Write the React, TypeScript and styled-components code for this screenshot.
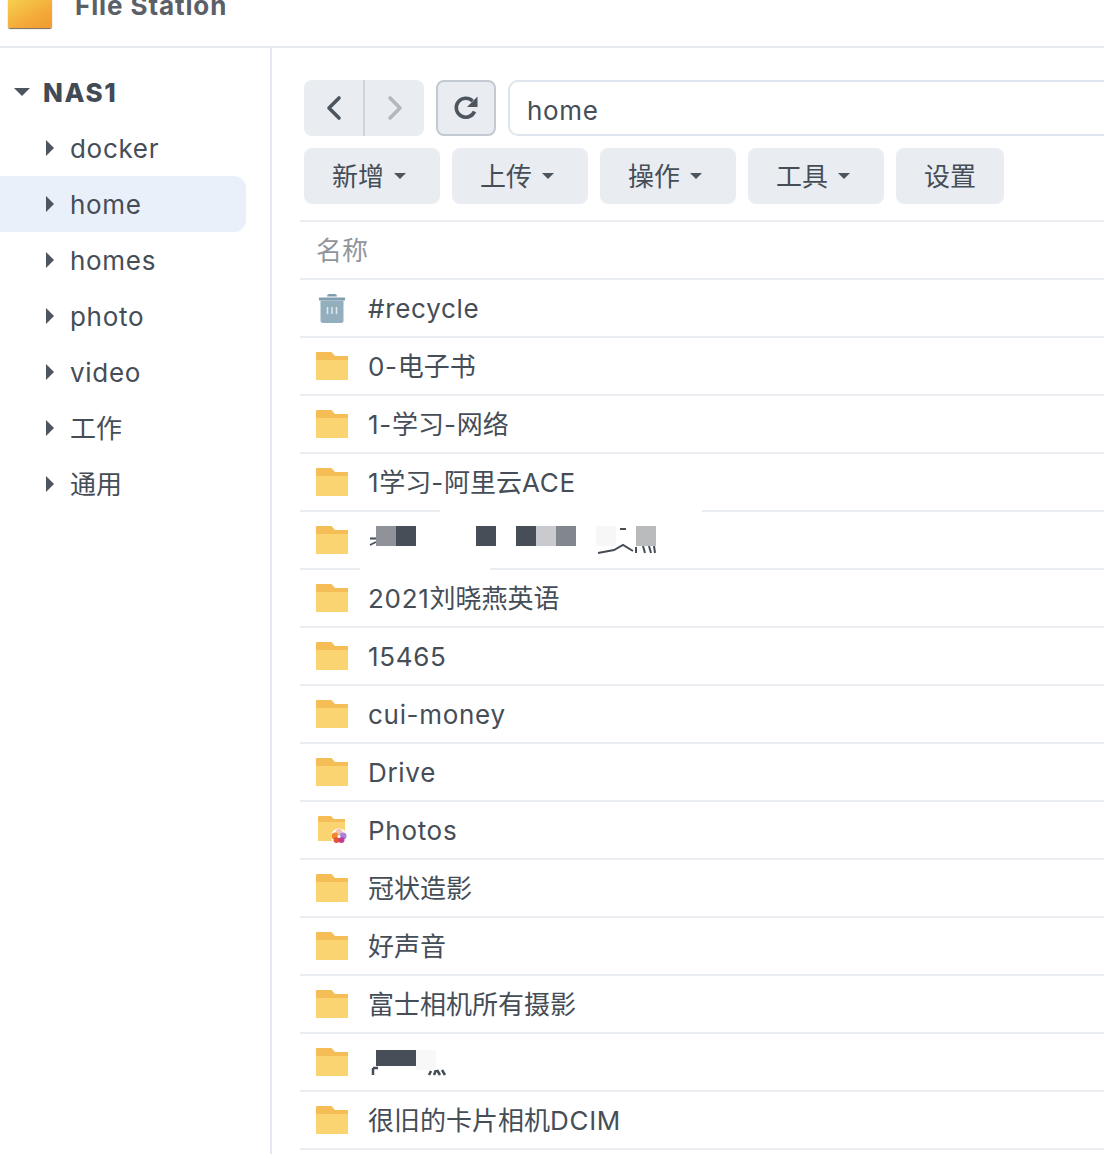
import React from 'react'
import styled, { createGlobalStyle } from 'styled-components'

const TEXT = '#454d57'
const LINE = '#e9edf1'

const GlobalStyle = createGlobalStyle`
  html, body {
    margin: 0;
    height: 1154px;
    overflow: hidden;
    background: #fff;
    font-family: Inter, "Noto Sans CJK SC", sans-serif;
    color: ${TEXT};
  }
`

const treeItems = ['docker', 'home', 'homes', 'photo', 'video', '工作', '通用']

type FileRow = {
  name?: string
  icon?: 'folder' | 'trash' | 'photos'
  scraps?: 'first' | 'second'
}

const files: FileRow[] = [
  { name: '#recycle', icon: 'trash' },
  { name: '0-电子书' },
  { name: '1-学习-网络' },
  { name: '1学习-阿里云ACE' },
  { scraps: 'first' },
  { name: '2021刘晓燕英语' },
  { name: '15465' },
  { name: 'cui-money' },
  { name: 'Drive' },
  { name: 'Photos', icon: 'photos' },
  { name: '冠状造影' },
  { name: '好声音' },
  { name: '富士相机所有摄影' },
  { scraps: 'second' },
  { name: '很旧的卡片相机DCIM' },
]

// latin runs are a touch wider in the original font, CJK runs are not
const Label = ({ text }: { text: string }) => (
  <LabelText>
    {text.split(/([\x20-\x7e]+)/).filter(Boolean).map((run, i) =>
      /^[\x20-\x7e]+$/.test(run) ? <Latin key={i}>{run}</Latin> : run
    )}
  </LabelText>
)

const FolderIcon = () => (
  <svg width="32" height="28" viewBox="0 0 32 28">
    <path d="M0 1a1 1 0 0 1 1-1h14.500l3.500 4h13v6H0z" fill="#f5bd55" />
    <path d="M0 8h32v20H0z" fill="#f9d471" />
  </svg>
)

const TrashIcon = () => (
  <svg width="26" height="30" viewBox="0 0 26 30">
    <path d="M8 3.500Q8 1 10 1h6q2 0 2 2.500z" fill="#7f9fb0" />
    <path d="M0 4.500h26v3H0z" fill="#7f9fb0" />
    <path d="M1.500 7.500h23v20a2.500 2.500 0 0 1-2.500 2.500H4a2.500 2.500 0 0 1-2.500-2.500z" fill="#93afbe" />
    <path d="M8.500 14v7M13 14v7M17.500 14v7" stroke="#dfe8ed" strokeWidth="1.500" />
  </svg>
)

const PhotosIcon = () => (
  <svg width="30" height="28" viewBox="0 0 30 28">
    <path d="M1 1a1 1 0 0 1 1-1h12l3 3h11v6H1z" fill="#f5bd55" />
    <path d="M1 6h27v19H1z" fill="#f9d471" />
    <circle cx="22" cy="20.500" r="8" fill="#fff" />
    <circle cx="22" cy="16.500" r="3.500" fill="#f3c1b4" />
    <circle cx="18" cy="20" r="3.500" fill="#f08a2c" />
    <circle cx="26" cy="20" r="3.500" fill="#a583dc" />
    <circle cx="19.500" cy="24" r="3" fill="#e8552e" />
    <circle cx="24.500" cy="24" r="3" fill="#c23c96" />
    <circle cx="22" cy="20.500" r="1.500" fill="#fff" />
  </svg>
)

const NavArrow = ({ dir, dim }: { dir: 'left' | 'right'; dim?: boolean }) => (
  <svg width="16" height="26" viewBox="0 0 16 26">
    <path
      d={dir === 'left' ? 'M13 3 3 13l10 10' : 'M3 3l10 10L3 23'}
      fill="none"
      stroke={dim ? '#b3b7bb' : '#4d555f'}
      strokeWidth="3.600"
      strokeLinecap="round"
      strokeLinejoin="round"
    />
  </svg>
)

const RefreshIcon = () => (
  <svg width="26" height="26" viewBox="0 0 26 26">
    <path
      d="M21.500 16.500A9.500 9.500 0 1 1 19.500 6"
      fill="none"
      stroke="#4d555f"
      strokeWidth="3.600"
    />
    <path d="M24.500 1.500v10.500H14z" fill="#4d555f" />
  </svg>
)

const ScrapsOne = () => (
  <ScrapLayer>
    <svg width="300" height="28" viewBox="0 0 300 28">
      <path d="M8 10.500h14l3 1.500M8 17l6-3" stroke="#454d57" strokeWidth="1.800" fill="none" />
      <path d="M236 25l16-3 9-5 10 6M274 19v6M281 18l2 7M287 18l2 7M292 18l1 7M258 1h6" stroke="#454d57" strokeWidth="2" fill="none" />
    </svg>
  </ScrapLayer>
)

const ScrapsTwo = () => (
  <ScrapLayer>
    <svg width="100" height="28" viewBox="0 0 100 28">
      <path d="M11 18h5M11 18v7" stroke="#454d57" strokeWidth="2.500" fill="none" />
      <path d="M67 25l2-4M72 25l2-5M78 25l-3-5M83 25l-3-5" stroke="#454d57" strokeWidth="2.500" fill="none" />
    </svg>
  </ScrapLayer>
)

const App: React.FC = () => {
  return (
    <>
      <GlobalStyle />
      <Window>
        <TitleBar>
          <AppIcon />
          <AppName>File Station</AppName>
        </TitleBar>
        <Body>
          <Sidebar>
            <RootNode>
              <CaretDown />
              <RootLabel>NAS1</RootLabel>
            </RootNode>
            {treeItems.map((item) => (
              <TreeRow key={item} $active={item === 'home'}>
                <CaretRight />
                <Label text={item} />
              </TreeRow>
            ))}
          </Sidebar>
          <Main>
            <Toolbar>
              <NavGroup>
                <NavButton>
                  <NavArrow dir="left" />
                </NavButton>
                <NavButton $divided>
                  <NavArrow dir="right" dim />
                </NavButton>
              </NavGroup>
              <RefreshButton>
                <RefreshIcon />
              </RefreshButton>
              <PathInput>
                <Label text="home" />
              </PathInput>
            </Toolbar>
            <Toolbar>
              <MenuButton><Label text="新增" /><MenuCaret /></MenuButton>
              <MenuButton><Label text="上传" /><MenuCaret /></MenuButton>
              <MenuButton><Label text="操作" /><MenuCaret /></MenuButton>
              <MenuButton><Label text="工具" /><MenuCaret /></MenuButton>
              <MenuButton $plain><Label text="设置" /></MenuButton>
            </Toolbar>
            <Table>
              <HeaderRow>
                <Label text="名称" />
              </HeaderRow>
              {files.map((file, i) => (
                <Row key={file.name || i}>
                  <IconSlot>
                    {file.icon === 'trash' ? <TrashIcon /> : file.icon === 'photos' ? <PhotosIcon /> : <FolderIcon />}
                  </IconSlot>
                  {file.name && <Label text={file.name} />}
                  {file.scraps === 'first' && (
                    <Redaction>
                      <WhitePatch $left={140} $width={262} $edge="top" />
                      <WhitePatch $left={60} $width={130} $edge="bottom" />
                      <ScrapsOne />
                      <Cells $top={14}>
                        <Cell $color="#8f9299" />
                        <Cell $color="#474e58" />
                        <Cell $gap={60} $color="#474e58" />
                        <Cell $gap={20} $color="#474e58" />
                        <Cell $color="#c8cacd" />
                        <Cell $color="#82868d" />
                        <Cell $gap={20} $color="#f7f7f7" />
                        <Cell $gap={20} $color="#b8babc" />
                      </Cells>
                    </Redaction>
                  )}
                  {file.scraps === 'second' && (
                    <Redaction>
                      <ScrapsTwo />
                      <Cells $top={16}>
                        <Cell $wide $color="#474e58" />
                        <Cell $color="#f8f8f8" />
                      </Cells>
                    </Redaction>
                  )}
                </Row>
              ))}
            </Table>
          </Main>
        </Body>
      </Window>
    </>
  )
}

export default App

const LabelText = styled.span`
  padding-top: 2px;
  font-size: 26px;
  line-height: 30px;
  white-space: nowrap;
`

const Latin = styled.span`
  letter-spacing: 0.7px;
`

const Window = styled.div`
  width: 1104px;
  height: 1154px;
  overflow: hidden;
  display: flex;
  flex-direction: column;
`

const TitleBar = styled.header`
  flex: none;
  height: 46px;
  border-bottom: 2px solid #e8ebf0;
  display: flex;
  align-items: flex-start;
  overflow: hidden;
  padding-left: 8px;
`

const AppIcon = styled.div`
  flex: none;
  width: 44px;
  height: 28px;
  border-radius: 0 0 2px 2px;
  background: linear-gradient(150deg, #f6d04e 0%, #f4aa3a 60%, #f09a30 100%);
  box-shadow: 0 1px 1px #7d6a50;
`

const AppName = styled.div`
  margin: -11px 0 0 23px;
  font-size: 26px;
  line-height: 34px;
  font-weight: 700;
  letter-spacing: 0.9px;
  color: #5a6068;
`

const Body = styled.div`
  flex: 1;
  display: flex;
  min-height: 0;
`

const Sidebar = styled.nav`
  flex: none;
  box-sizing: border-box;
  width: 272px;
  border-right: 2px solid #e3e7ef;
  padding: 16px 24px 0 0;
`

const RootNode = styled.div`
  height: 56px;
  display: flex;
  align-items: center;
  padding-left: 14px;
`

const RootLabel = styled.span`
  margin-left: 13px;
  font-size: 26px;
  font-weight: 800;
  letter-spacing: 1.6px;
  color: #414a55;
`

const CaretDown = styled.span`
  width: 0;
  height: 0;
  border-left: 8px solid transparent;
  border-right: 8px solid transparent;
  border-top: 8px solid #4d555f;
`

const TreeRow = styled.div<{ $active?: boolean }>`
  height: 56px;
  display: flex;
  align-items: center;
  padding-left: 46px;
  border-radius: 0 12px 12px 0;
  background: ${(p) => (p.$active ? '#e9f0fa' : 'transparent')};
`

const CaretRight = styled.span`
  flex: none;
  margin-right: 16px;
  width: 0;
  height: 0;
  border-top: 8px solid transparent;
  border-bottom: 8px solid transparent;
  border-left: 8px solid #4d555f;
`

const Main = styled.main`
  flex: 1;
  min-width: 0;
  padding: 32px 0 0 28px;
`

const Toolbar = styled.div`
  display: flex;
  gap: 12px;
  margin: 0 0 12px 4px;
  height: 56px;
`

const NavGroup = styled.div`
  flex: none;
  display: flex;
  width: 120px;
  border-radius: 8px;
  background: #e9edf1;
  overflow: hidden;
`

const NavButton = styled.div<{ $divided?: boolean }>`
  flex: ${(p) => (p.$divided ? '0 0 61px' : '1')};
  box-sizing: border-box;
  display: flex;
  align-items: center;
  justify-content: center;
  border-left: ${(p) => (p.$divided ? '2px solid #cdd6df' : 'none')};
`

const RefreshButton = styled.div`
  flex: none;
  box-sizing: border-box;
  width: 60px;
  border: 2px solid #c2c9d2;
  border-radius: 8px;
  background: #e9edf1;
  display: flex;
  align-items: center;
  justify-content: center;
`

const PathInput = styled.div`
  flex: none;
  box-sizing: border-box;
  width: 640px;
  border: 2px solid #dde5ee;
  border-radius: 10px;
  padding: 4px 0 0 17px;
  display: flex;
  align-items: center;
`

const MenuButton = styled.div<{ $plain?: boolean }>`
  flex: none;
  box-sizing: border-box;
  width: ${(p) => (p.$plain ? 108 : 136)}px;
  border-radius: 8px;
  background: #e9edf1;
  display: flex;
  align-items: center;
  justify-content: center;
`

const MenuCaret = styled.span`
  margin: 0 6px 0 10px;
  width: 0;
  height: 0;
  border-left: 6px solid transparent;
  border-right: 6px solid transparent;
  border-top: 6px solid #4d555f;
`

const Table = styled.div`
  margin-top: 16px;
  border-top: 2px solid ${LINE};
`

const HeaderRow = styled.div`
  box-sizing: border-box;
  height: 58px;
  border-bottom: 2px solid ${LINE};
  padding-left: 16px;
  display: flex;
  align-items: center;
  color: #91959b;
`

const Row = styled.div`
  position: relative;
  box-sizing: border-box;
  height: 58px;
  border-bottom: 2px solid ${LINE};
  padding-left: 16px;
  display: flex;
  align-items: center;
  gap: 20px;
`

const IconSlot = styled.span`
  flex: none;
  width: 32px;
  height: 30px;
  display: flex;
  align-items: center;
  justify-content: center;
`

const Redaction = styled.div`
  position: absolute;
  inset: 0;
`

const WhitePatch = styled.div<{ $left: number; $width: number; $edge: 'top' | 'bottom' }>`
  position: absolute;
  left: ${(p) => p.$left}px;
  width: ${(p) => p.$width}px;
  ${(p) => p.$edge}: -2px;
  height: 30px;
  background: #fff;
`

const ScrapLayer = styled.div`
  position: absolute;
  left: 62px;
  top: 16px;
  line-height: 0;
`

const Cells = styled.div<{ $top: number }>`
  position: absolute;
  left: 76px;
  top: ${(p) => p.$top}px;
  display: flex;
`

const Cell = styled.span<{ $color: string; $gap?: number; $wide?: boolean }>`
  width: ${(p) => (p.$wide ? 40 : 20)}px;
  height: ${(p) => (p.$wide ? 16 : 20)}px;
  margin-left: ${(p) => p.$gap || 0}px;
  background: ${(p) => p.$color};
`
